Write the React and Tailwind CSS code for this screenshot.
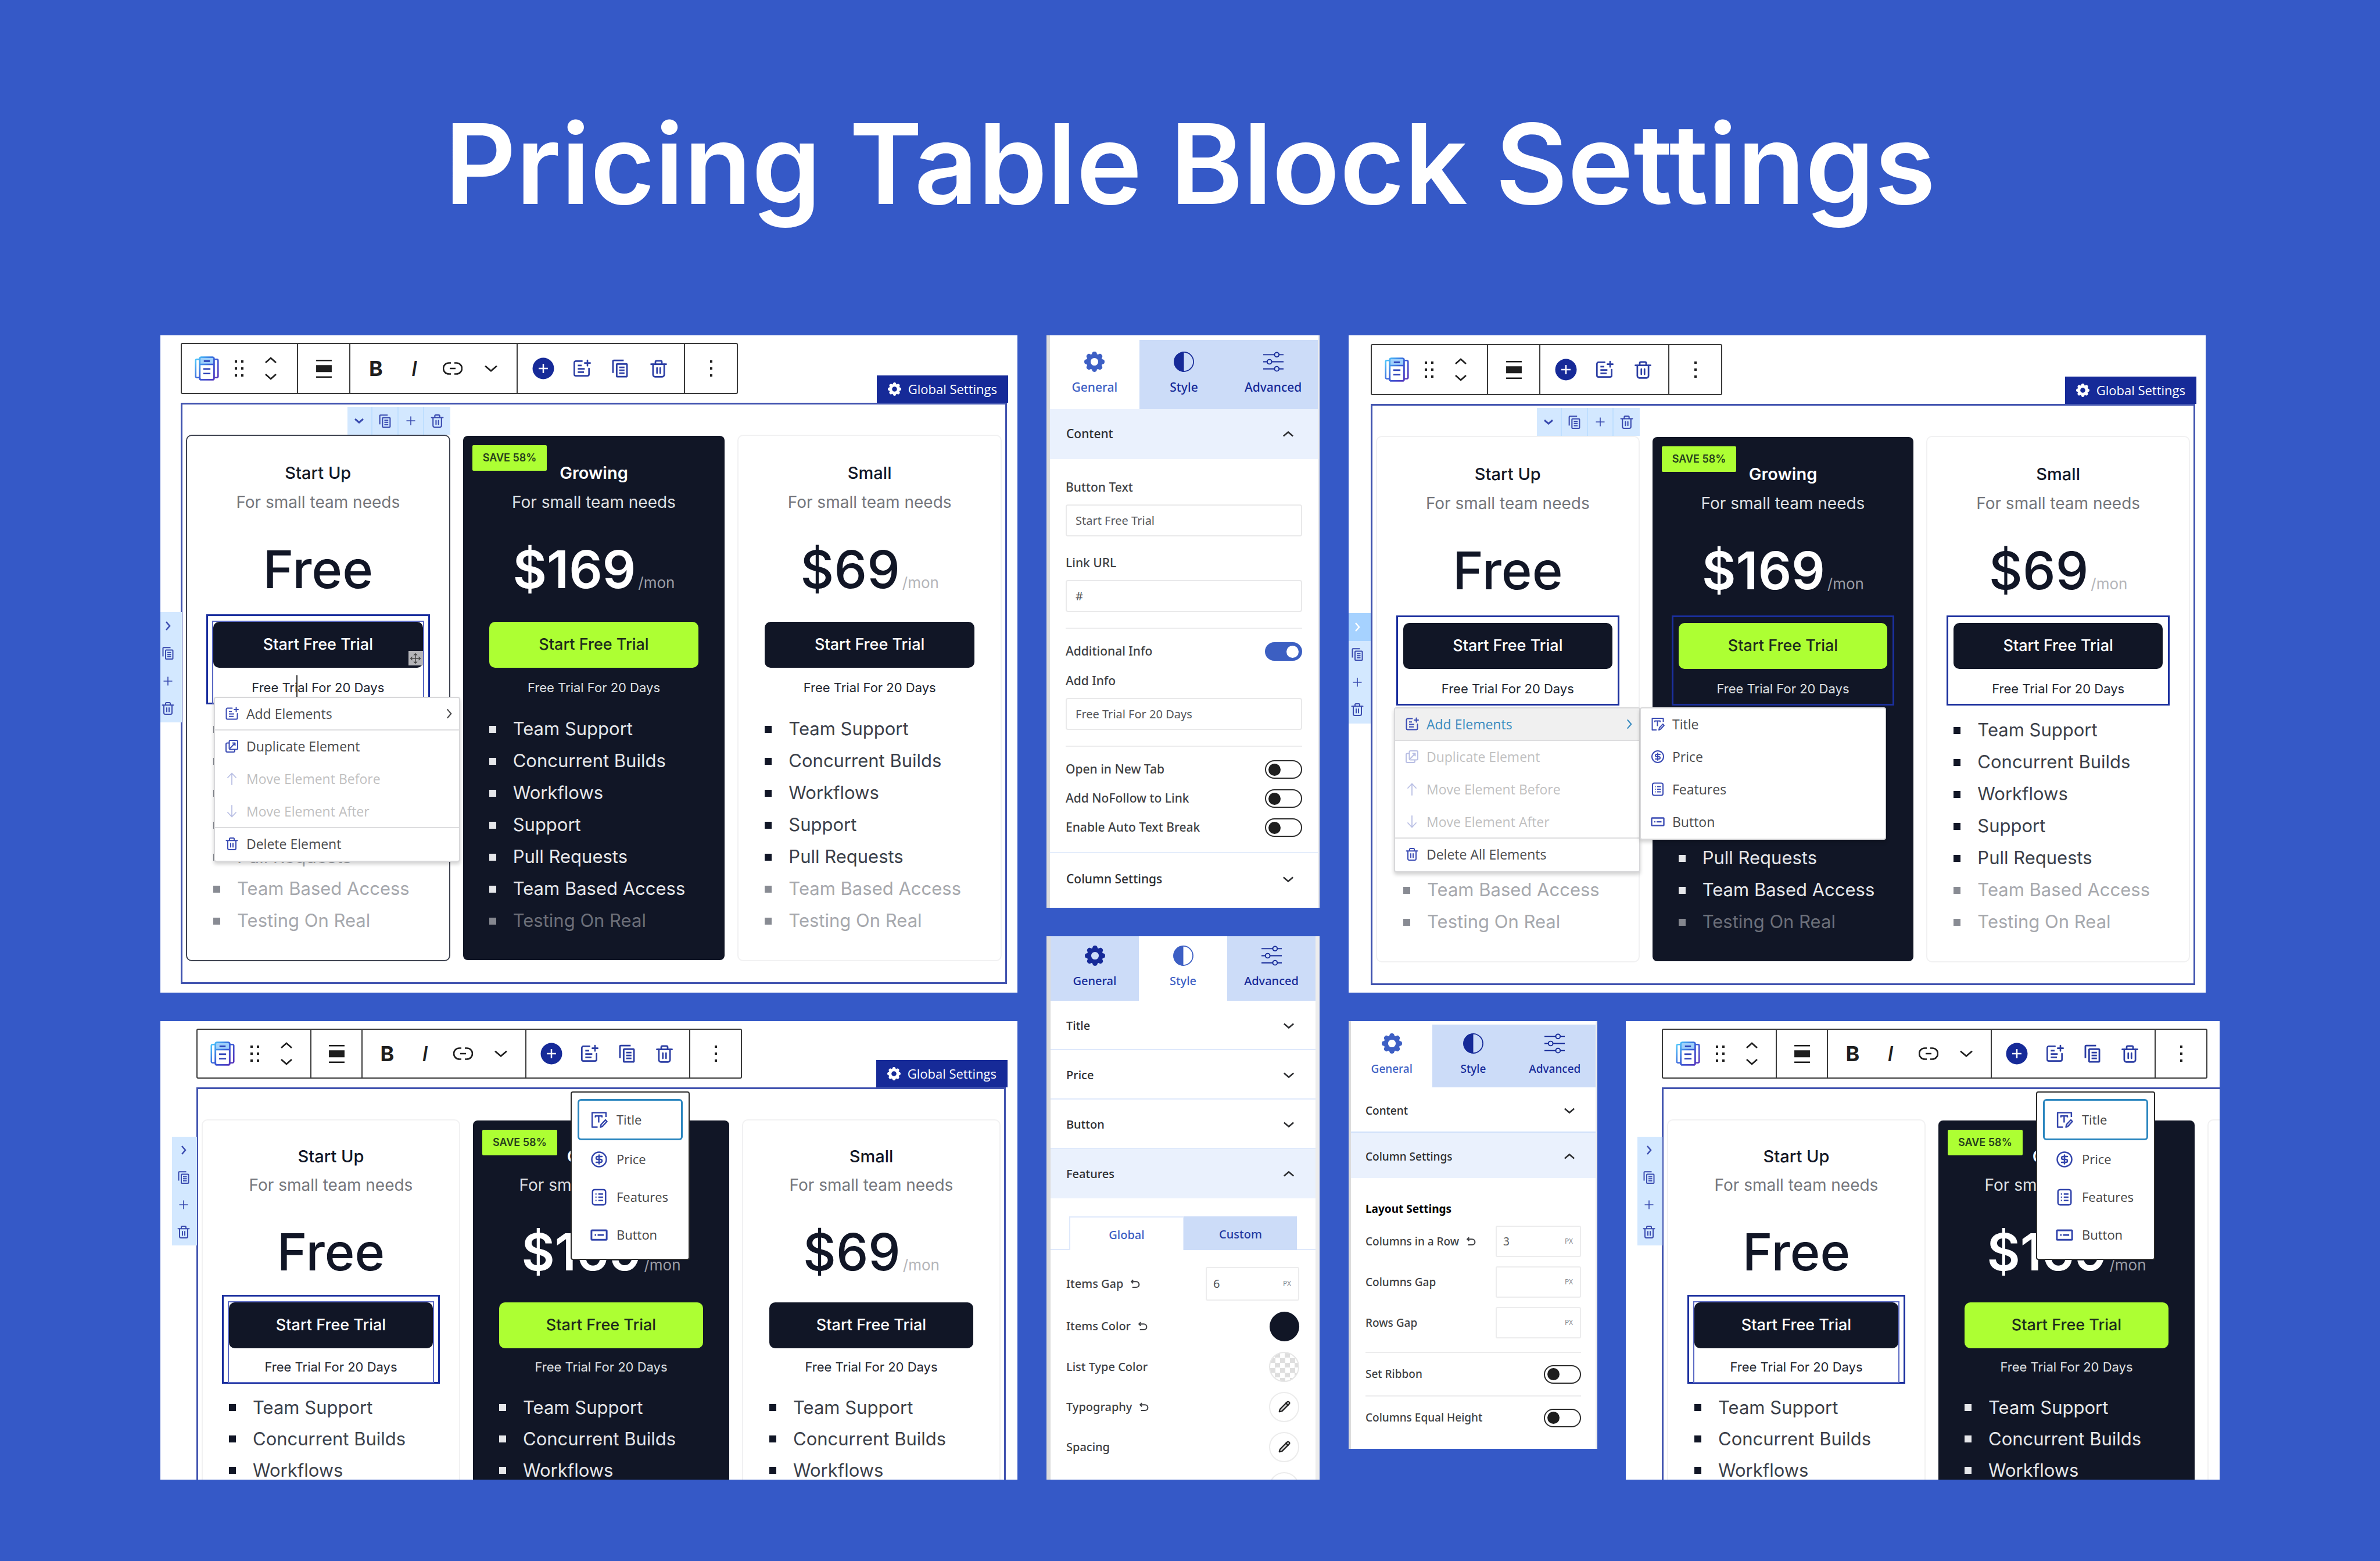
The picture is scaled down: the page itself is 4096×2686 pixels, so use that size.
import React, { useId } from "react";
import { CircleDollarSign, Pencil } from "lucide-react";

/* ---------- icons ---------- */

function Icon({ className = "size-8", sw = 2, children }) {
  return (
    <svg viewBox="0 0 24 24" className={className} fill="none" stroke="currentColor" strokeWidth={sw} strokeLinecap="round" strokeLinejoin="round" aria-hidden="true">
      {children}
    </svg>
  );
}

function PricingIcon() {
  const id = useId();
  return (
    <svg viewBox="0 0 24 24" className="size-[42px]" fill="none" stroke={`url(#${id})`} strokeWidth="1.5" aria-hidden="true">
      <defs>
        <linearGradient id={id} x1="0" y1="2" x2="24" y2="22" gradientUnits="userSpaceOnUse">
          <stop offset="0" stopColor="#4fd0ff" />
          <stop offset="0.5" stopColor="#3a5fd8" />
          <stop offset="1" stopColor="#5a2fb8" />
        </linearGradient>
      </defs>
      <path d="M5 3H2.200a1.200 1.200 0 0 0-1.200 1.200v15.600A1.200 1.200 0 0 0 2.200 21H5M19 3h2.800A1.200 1.200 0 0 1 23 4.200v15.600a1.200 1.200 0 0 1-1.200 1.200H19" />
      <rect x="5" y="1" width="14" height="22" rx="1.500" fill="#fff" />
      <path d="M5.500 1.500h13v6h-13z" fill="#9fd0fb" stroke="none" />
      <path d="M5 8h14" />
      <path d="M9 4.800h6M8.500 12.500h7M8.500 17h7" stroke="#2a3fb8" />
      <rect x="5" y="1" width="14" height="22" rx="1.500" />
    </svg>
  );
}

const Gear = ({ className }) => (
  <svg viewBox="-18 -18 36 36" className={className} fill="currentColor" aria-hidden="true">
    <circle r="10.500" fill="none" stroke="currentColor" strokeWidth="7.500" />
    {[0, 45, 90, 135, 180, 225, 270, 315].map((a) => (
      <path key={a} d="M-5 -13L-3.500 -16.500Q-2.500 -18 0 -18T3.500 -16.500L5 -13z" transform={`rotate(${a})`} />
    ))}
  </svg>
);

const Dots = () => (
  <svg viewBox="0 0 18 30" className="h-[30px] w-[18px]" fill="#1e1e1e" aria-hidden="true">
    {[2, 13].map((x) => [1, 13, 25].map((y) => <rect key={`${x}-${y}`} x={x} y={y} width="4" height="4" />))}
  </svg>
);

const MoreDots = () => (
  <svg viewBox="0 0 6 30" className="h-[30px] w-[6px]" fill="#1e1e1e" aria-hidden="true">
    {[1, 13, 25].map((y) => <rect key={y} x="1" y={y} width="4" height="4" />)}
  </svg>
);

const Movers = () => (
  <svg viewBox="0 0 22 42" className="h-[42px] w-[22px]" fill="none" stroke="#1e1e1e" strokeWidth="2.800" aria-hidden="true">
    <path d="M2 11l9-8 9 8M2 31l9 8 9-8" />
  </svg>
);

const AlignIcon = () => (
  <svg viewBox="0 0 26 30" className="h-[31px] w-[27px]" fill="#1e1e1e" aria-hidden="true">
    <path d="M0 0h26v2.500H0zM0 9h26v11.500H0zM0 27.500h26V30H0z" />
  </svg>
);

const LinkIcon = () => (
  <svg viewBox="0 0 34 22" className="h-[22px] w-[34px]" fill="none" stroke="#1e1e1e" strokeWidth="2.600" aria-hidden="true">
    <path d="M14 1.500h-3.500a9.500 9.500 0 0 0 0 19H14M20 1.500h3.500a9.500 9.500 0 0 1 0 19H20M12 11h10" />
  </svg>
);

const ChevronDown = ({ className = "size-8", sw = 2 }) => <Icon className={className} sw={sw}><path d="M5 9l7 6 7-6" strokeLinecap="butt" strokeLinejoin="miter" /></Icon>;
const ChevronUp = ({ className = "size-8", sw = 2 }) => <Icon className={className} sw={sw}><path d="M5 15l7-6 7 6" strokeLinecap="butt" strokeLinejoin="miter" /></Icon>;
const ChevronRight = ({ className = "size-8", sw = 2 }) => <Icon className={className} sw={sw}><path d="M9 5l6 7-6 7" strokeLinecap="butt" strokeLinejoin="miter" /></Icon>;
const Plus = ({ className = "size-8" }) => <Icon className={className} sw={2}><path d="M12 3v18M3 12h18" strokeLinecap="butt" /></Icon>;

const PlusCircle = () => (
  <svg viewBox="0 0 38 38" className="size-[38px]" aria-hidden="true">
    <circle cx="19" cy="19" r="18.500" fill="#162a98" />
    <path d="M19 11v16M11 19h16" stroke="#fff" strokeWidth="2.500" />
  </svg>
);

const AddDoc = ({ className = "size-8" }) => (
  <Icon className={className} sw={2}>
    <path d="M12.500 2.500H4.500a2 2 0 0 0-2 2v15a2 2 0 0 0 2 2h15a2 2 0 0 0 2-2v-7.500" />
    <path d="M7 8.200h5M7 12.500h9M7 16.800h8" strokeLinecap="butt" />
    <path d="M19.500 1.500v7M16 5h7" />
  </Icon>
);

const Copy = ({ className = "size-8" }) => (
  <Icon className={className} sw={2}>
    <path d="M3.500 17.500V3.200a1 1 0 0 1 1-1h12" strokeLinecap="butt" />
    <rect x="8" y="6.500" width="12.500" height="15.500" rx="1" />
    <path d="M11 10.700h6.500M11 14.200h6.500M11 17.700h6.500" strokeLinecap="butt" />
  </Icon>
);

const Trash = ({ className = "size-8" }) => (
  <Icon className={className} sw={2}>
    <path d="M2.500 6.200h19" />
    <path d="M8 6V3.500A1.500 1.500 0 0 1 9.500 2h5A1.500 1.500 0 0 1 16 3.500V6" />
    <path d="M5 6.500v13A2.500 2.500 0 0 0 7.500 22h9a2.500 2.500 0 0 0 2.500-2.500v-13" />
    <path d="M10 11v6.500M14 11v6.500" />
  </Icon>
);

const Duplicate = ({ className = "size-8" }) => (
  <Icon className={className} sw={2}>
    <path d="M7.500 6.500H4a2 2 0 0 0-2 2V20a2 2 0 0 0 2 2h11a2 2 0 0 0 2-2v-2" />
    <rect x="7.500" y="2" width="14.500" height="15.500" rx="2" />
    <path d="M9.500 15l8-8.500M13.500 6.500h4v4" />
  </Icon>
);

const ArrowUp = ({ className = "size-8" }) => <Icon className={className} sw={1.800}><path d="M12 22V3M5 10l7-7.500 7 7.500" /></Icon>;
const ArrowDown = ({ className = "size-8" }) => <Icon className={className} sw={1.800}><path d="M12 2v19M5 14l7 7.500 7-7.500" /></Icon>;

const TitleIcon = ({ className = "size-8" }) => (
  <Icon className={className} sw={2}>
    <path d="M21.500 8V2h-19v20H10" strokeLinecap="butt" />
    <path d="M7 8.500V6.500h9v2M11.500 6.500v9" strokeLinecap="butt" />
    <path d="M14 22l.8-3.600 6-6.400 2 2.200-6 6.500z" />
  </Icon>
);

const FeaturesIcon = ({ className = "size-8" }) => (
  <Icon className={className} sw={2}>
    <rect x="3" y="1.500" width="18" height="21" rx="3" />
    <path d="M7 7.500h1.500M11 7.500h6.500M7 12h1.500M11 12h6.500M7 16.500h1.500M11 16.500h6.500" strokeLinecap="butt" />
  </Icon>
);

const ButtonIcon = ({ className = "size-8" }) => (
  <Icon className={className} sw={2.400}>
    <rect x="1.500" y="5.500" width="21" height="13" rx="0.800" />
    <path d="M6 12h2M10 12h8.500" strokeLinecap="butt" />
  </Icon>
);

const DollarIcon = ({ className = "size-8" }) => <CircleDollarSign className={className} aria-hidden="true" />;

const Contrast = ({ className }) => (
  <svg viewBox="0 0 36 36" className={className} aria-hidden="true">
    <circle cx="18" cy="18" r="17" fill="none" stroke="currentColor" strokeWidth="1.800" />
    <path d="M18 0.500a17.500 17.500 0 0 0 0 35z" fill="currentColor" />
  </svg>
);

const Sliders = ({ className }) => (
  <svg viewBox="0 0 36 36" className={className} fill="none" stroke="currentColor" strokeWidth="2" aria-hidden="true">
    <path d="M0 5.500h20M28 5.500h8M0 18h7M15 18h21M0 30.500h20M28 30.500h8" />
    <circle cx="24" cy="5.500" r="4" />
    <circle cx="11" cy="18" r="4" />
    <circle cx="24" cy="30.500" r="4" />
  </svg>
);

const Reset = () => (
  <Icon className="size-[18px]" sw={2.800}>
    <path d="M3 7h11a6 6 0 0 1 0 13H5" strokeLinecap="butt" />
    <path d="M7 3L3 7l4 4" strokeLinejoin="miter" strokeLinecap="butt" />
  </Icon>
);

/* ---------- block editor ---------- */

function Tool({ label, compact, children }) {
  return (
    <button aria-label={label} className={`flex h-full items-center justify-center ${compact ? "w-[65px]" : "w-[66px]"}`}>
      {children}
    </button>
  );
}

function Toolbar({ compact, text = true, copy = true }) {
  const group = compact ? "px-[10px]" : "px-[11px]";
  return (
    <div role="toolbar" className={`flex divide-x-2 divide-[#3a3a3a] rounded-[3px] border-2 border-[#3a3a3a] bg-white text-[#2c3ea4] ${compact ? "h-[86px]" : "h-[88px]"}`}>
      <div className={`flex items-center pl-[22px] ${compact ? "w-[196px]" : "w-[200px]"}`}>
        <button aria-label="Pricing table"><PricingIcon /></button>
        <button aria-label="Drag" className="ml-[25px]"><Dots /></button>
        <button aria-label="Move up or down" className="ml-[35px]"><Movers /></button>
      </div>
      <div className={`flex items-center justify-center ${compact ? "w-[88px]" : "w-[90px]"}`}>
        <button aria-label="Align"><AlignIcon /></button>
      </div>
      {text && (
        <div className={`flex text-[36px] text-[#1e1e1e] ${group}`}>
          <Tool label="Bold" compact={compact}><span className="font-bold">B</span></Tool>
          <Tool label="Italic" compact={compact}><span className="font-medium italic">I</span></Tool>
          <Tool label="Link" compact={compact}><LinkIcon /></Tool>
          <Tool label="More" compact={compact}><ChevronDown className="size-[34px]" /></Tool>
        </div>
      )}
      <div className={`flex ${group}`}>
        <Tool label="Add" compact={compact}><PlusCircle /></Tool>
        <Tool label="Add element" compact={compact}><AddDoc className="size-[32px]" /></Tool>
        {copy && <Tool label="Duplicate" compact={compact}><Copy className="size-[34px]" /></Tool>}
        <Tool label="Delete" compact={compact}><Trash className="size-[33px]" /></Tool>
      </div>
      <div className={`flex items-center justify-center ${compact ? "w-[87px]" : "w-[89px]"}`}>
        <button aria-label="Options"><MoreDots /></button>
      </div>
    </div>
  );
}

function GlobalSettings() {
  return (
    <button className="flex h-[47px] items-center gap-3 bg-[#162a98] px-[19px] font-['Open_Sans',sans-serif] text-[22px] font-medium text-white">
      <Gear className="size-[23px]" />
      Global Settings
    </button>
  );
}

function ColumnTools() {
  return (
    <div className="flex h-12 divide-x-2 divide-[#bfdfff] bg-[#d3e8ff] text-[#3a4bb0]">
      <button aria-label="Collapse" className="flex w-[43px] items-center justify-center"><ChevronDown className="size-6" sw={3} /></button>
      <button aria-label="Duplicate column" className="flex w-[45px] items-center justify-center"><Copy className="size-[25px]" /></button>
      <button aria-label="Add column" className="flex w-[44px] items-center justify-center"><Plus className="size-5" /></button>
      <button aria-label="Delete column" className="flex w-[45px] items-center justify-center"><Trash className="size-[25px]" /></button>
    </div>
  );
}

function SideTools({ className, active, pad = "" }) {
  const cell = `flex flex-1 items-center justify-center ${pad}`;
  return (
    <div className={`absolute flex flex-col bg-[#d3e8ff] text-[#3a4bb0] ${className}`}>
      <button aria-label="Next" className={`${cell} ${active ? "bg-[#a6d2ff] text-white" : ""}`}><ChevronRight className="size-6" sw={2.500} /></button>
      <button aria-label="Duplicate" className={cell}><Copy className="size-6" /></button>
      <button aria-label="Add" className={cell}><Plus className="size-5" /></button>
      <button aria-label="Delete" className={cell}><Trash className="size-6" /></button>
    </div>
  );
}

const FEATURES = ["Team Support", "Concurrent Builds", "Workflows", "Support", "Pull Requests", "Team Based Access", "Testing On Real"];

function PlanCard({ name, price, mon, dark, badge, mutedFrom, count, compact, outlined, selected, inner, editing }) {
  const edge = dark ? "border-transparent bg-[#111626] bg-clip-padding text-white" : outlined ? "border-[#3f4350] bg-white" : "border-[#f1f1f2] bg-white";
  return (
    <article className={`relative rounded-[10px] border-2 text-[#111626] ${edge} ${compact ? "pt-[42px] pb-10" : "pt-[44px] pb-10"}`}>
      {badge && (
        <span className="absolute top-4 left-4 rounded-[2px] bg-[#adff33] px-[18px] text-[18px] leading-[44px] font-semibold text-[#26401c]">SAVE 58%</span>
      )}
      <h3 className={`text-center text-[29px] leading-10 ${dark ? "font-semibold" : "font-medium"}`}>{name}</h3>
      <p className={`text-center text-[28px] ${dark ? "text-[#dfe0e3]" : "text-[#74767c]"} ${compact ? "leading-[58px]" : "leading-[60px]"}`}>For small team needs</p>
      <p className={`text-center whitespace-nowrap ${compact ? "pt-3 text-[88px] leading-[148px]" : "pt-[9px] text-[90px] leading-[154px]"} ${dark ? "font-semibold" : "font-medium"}`}>
        {price}
        {mon && <span className={`ml-1 text-[26px] leading-none font-normal ${dark ? "text-[#9c9ea6]" : "text-[#b4b5b9]"}`}>/mon</span>}
      </p>
      <div className={`mx-[33px] border-[3px] px-[9px] pt-[10px] ${selected ? "border-[#1b2f9e]" : "border-transparent"}`}>
        <div className={inner ? "outline-2 outline-[#5a69c4] outline-solid" : ""}>
          <button className={`relative h-[79px] w-full rounded-[10px] text-[27px] font-medium ${dark ? "bg-[#adff33] text-[#1d2b1c]" : "bg-[#111626] text-white"}`}>
            Start Free Trial
            {editing && (
              <span className="absolute right-0 bottom-1 flex size-[25px] items-center justify-center bg-[#b4b4b8] text-[#444]">
                <Icon className="size-5" sw={1.800}><path d="M12 2v20M2 12h20M9 5l3-3 3 3M9 19l3 3 3-3M5 9l-3 3 3 3M19 9l3 3-3 3" /></Icon>
              </span>
            )}
          </button>
          <p className={`text-center text-[22px] leading-[52px] ${dark ? "text-[#dfe0e3]" : "text-[#22262f]"} ${compact ? "mt-[6px]" : "mt-2"}`}>
            Free Tr{editing ? <span className="relative after:absolute after:top-[-8px] after:left-[3px] after:h-[46px] after:w-[2px] after:bg-[#333]">i</span> : "i"}al For 20 Days
          </p>
        </div>
      </div>
      <ul className={compact ? "mt-[14px]" : "mt-[15px]"}>
        {FEATURES.slice(0, count).map((f, i) => {
          const muted = i >= mutedFrom;
          const tone = dark
            ? muted ? "text-[#6c6f79]" : "text-[#e6e7ea]"
            : muted ? "text-[#a6a8ad]" : "text-[#3b3f49]";
          const dot = dark
            ? muted ? "bg-[#85878f]" : "bg-[#e6e7ea]"
            : muted ? "bg-[#888b93]" : "bg-[#111626]";
          return (
            <li key={f} className={`flex items-center gap-[29px] pl-[45px] text-[31px] whitespace-nowrap ${tone} ${compact ? "h-[54px]" : "h-[55px]"}`}>
              <span className={`size-3 shrink-0 ${dot}`} />
              {f}
            </li>
          );
        })}
      </ul>
    </article>
  );
}

function Plans({ compact, tools, outlinedFirst, selectAll, inner, editing, mutedFirst, count, blankLast, className }) {
  return (
    <section className={`grid grid-cols-3 gap-x-5 border-[3px] border-[#4254b0] px-[6px] pt-1 ${className}`}>
      <div className="col-span-3 grid h-12 grid-cols-3 gap-x-5">
        <div className="flex justify-end">{tools && <ColumnTools />}</div>
      </div>
      <PlanCard name="Start Up" price="Free" mutedFrom={mutedFirst} count={count} compact={compact} outlined={outlinedFirst} selected inner={inner} editing={editing} />
      <PlanCard name="Growing" price="$169" mon dark badge mutedFrom={6} count={count} compact={compact} selected={selectAll} />
      {blankLast
        ? <article className="rounded-[10px] border-2 border-[#f1f1f2]" />
        : <PlanCard name="Small" price="$69" mon mutedFrom={5} count={count} compact={compact} selected={selectAll} />}
    </section>
  );
}

/* ---------- menus ---------- */

function MenuItem({ icon: I, children, disabled, active, arrow, line }) {
  return (
    <button
      role="menuitem"
      disabled={disabled}
      className={`flex h-14 w-full items-center gap-[13px] pr-1 pl-[17px] text-left ${line ? "border-[#dddddf]" : "border-transparent"} border-b-2 ${active ? "bg-[#f0f0f0] text-[#3a8cc0]" : "text-[#4a4a4c]"}`}
    >
      <I className={`size-[24px] shrink-0 text-[#3a4bb4] ${disabled ? "opacity-35" : ""}`} />
      <span className={`flex-1 ${disabled ? "opacity-35" : ""}`}>{children}</span>
      {arrow && <ChevronRight className="size-[26px]" sw={2} />}
    </button>
  );
}

const menuBox = "absolute z-10 w-[424px] overflow-hidden rounded-[4px] border-2 border-[#d8d8da] bg-white font-['Open_Sans',sans-serif] text-[23px] shadow-[0_4px_6px_rgba(0,0,0,0.18)]";

function ContextMenu({ className, opened }) {
  return (
    <div role="menu" className={`${menuBox} ${className}`}>
      <MenuItem icon={AddDoc} arrow line active={opened}>Add Elements</MenuItem>
      <MenuItem icon={Duplicate} disabled={opened}>Duplicate Element</MenuItem>
      <MenuItem icon={ArrowUp} disabled>Move Element Before</MenuItem>
      <MenuItem icon={ArrowDown} disabled line>Move Element After</MenuItem>
      <MenuItem icon={Trash}>{opened ? "Delete All Elements" : "Delete Element"}</MenuItem>
    </div>
  );
}

const ELEMENTS = [["Title", TitleIcon], ["Price", DollarIcon], ["Features", FeaturesIcon], ["Button", ButtonIcon]];

function ElementSubmenu({ className }) {
  return (
    <div role="menu" className={`${menuBox} ${className}`}>
      {ELEMENTS.map(([n, I]) => <MenuItem key={n} icon={I}>{n}</MenuItem>)}
    </div>
  );
}

function ElementPopup() {
  return (
    <div role="menu" className="absolute top-[121px] left-[706px] z-10 w-[205px] rounded-[4px] border-2 border-[#2a2a2a] bg-white px-[10px] pt-[11px] pb-[9px] font-['Open_Sans',sans-serif] text-[22px] text-[#444]">
      {ELEMENTS.map(([n, I], i) => (
        <button key={n} role="menuitem" className={`flex w-full items-center gap-[15px] rounded-[6px] border-[3px] pl-[19px] text-left ${i === 0 ? "h-[71px] border-[#2b86bf]" : "h-[65px] border-transparent"}`}>
          <I className="size-[30px] text-[#3345ac]" />
          {n}
        </button>
      ))}
    </div>
  );
}

/* ---------- settings sidebars ---------- */

function Tabs({ active, className }) {
  const tabs = [["General", Gear], ["Style", Contrast], ["Advanced", Sliders]];
  return (
    <div role="tablist" className={`grid shrink-0 grid-cols-3 font-medium ${className}`}>
      {tabs.map(([n, I]) => (
        <button key={n} role="tab" aria-selected={n === active} className={`flex flex-col items-center justify-center gap-[12px] pb-1 ${n === active ? "bg-white text-[#3d5fc4]" : "bg-[#ccdcf8] text-[#162a98]"}`}>
          <I className="size-[35px]" />
          <span className="leading-7">{n}</span>
        </button>
      ))}
    </div>
  );
}

function SectionHead({ open, className, children }) {
  return (
    <button aria-expanded={!!open} className={`flex w-full shrink-0 items-center justify-between text-left font-medium text-[#2c2d30] ${open ? "bg-[#eaf1fd]" : "bg-white"} ${className}`}>
      {children}
      {open ? <ChevronUp className="size-7" sw={2.200} /> : <ChevronDown className="size-7" sw={2.200} />}
    </button>
  );
}

function Field({ label, value, className }) {
  return (
    <label className={`flex flex-col gap-[14px] font-medium ${className}`}>
      <span className="leading-8">{label}</span>
      <input defaultValue={value} className="h-[55px] w-full rounded-[4px] border-2 border-[#e9e9ea] px-[15px] text-[20px] font-normal text-[#55565a]" />
    </label>
  );
}

function Toggle({ label, on, className }) {
  return (
    <label className={`flex items-center justify-between font-medium ${className}`}>
      {label}
      <input
        type="checkbox"
        role="switch"
        defaultChecked={on}
        className="flex h-8 w-[64px] appearance-none items-center rounded-full border-2 border-[#2a2a2a] bg-white px-[4px] before:block before:size-[21px] before:rounded-full before:bg-[#1e1e1e] checked:justify-end checked:border-[#3c5fc2] checked:bg-[#3c5fc2] checked:before:bg-white"
      />
    </label>
  );
}

function NumberField({ label, reset, value, className, boxClass }) {
  return (
    <label className={`flex items-center justify-between font-medium ${className}`}>
      <span className="flex items-center gap-3">{label}{reset && <Reset />}</span>
      <span className={`flex items-center rounded-[3px] border-2 border-[#ececed] bg-white pr-[12px] pl-[11px] ${boxClass}`}>
        <input defaultValue={value} className="w-0 min-w-0 flex-1 font-normal text-[#55565a]" />
        <span className="text-[12px] font-normal text-[#8a8b8f]">PX</span>
      </span>
    </label>
  );
}

function SwatchRow({ label, reset, kind, className }) {
  return (
    <div className={`flex shrink-0 items-center justify-between font-medium ${className}`}>
      <span className="flex items-center gap-3">{label}{reset && <Reset />}</span>
      {kind === "solid" && <button aria-label={label} className="size-[51px] rounded-full bg-[#111626]" />}
      {kind === "clear" && <button aria-label={label} className="size-[52px] rounded-full border-2 border-[#e6e6e6] bg-[repeating-conic-gradient(#dedede_0_25%,#fff_0_50%)] bg-[length:17px_17px]" />}
      {kind === "edit" && (
        <button aria-label={label || "Edit"} className="flex size-[52px] items-center justify-center rounded-full border-2 border-[#ececec]">
          <Pencil className="size-[21px] fill-[#d5d5d8] text-[#1e1e1e]" strokeWidth={2.500} />
        </button>
      )}
    </div>
  );
}

const sidebar = "border-l-[#dcdcdc] border-r-[#ededed] bg-white font-['Noto_Sans',sans-serif] text-[#3e3f43]";

function ContentSidebar() {
  return (
    <aside className={`border-r-[3px] border-l-[6px] pt-2 text-[21px] ${sidebar}`}>
      <Tabs active="General" className="h-[119px]" />
      <SectionHead open className="h-[86px] pr-[37px] pl-7">Content</SectionHead>
      <div className="px-[27px] pt-8 pb-[17px]">
        <Field label="Button Text" value="Start Free Trial" />
        <Field label="Link URL" value="#" className="mt-[29px]" />
        <hr className="mt-[27px] mb-[14px] border-t-2 border-[#ececed]" />
        <Toggle label="Additional Info" on className="h-[50px]" />
        <Field label="Add Info" value="Free Trial For 20 Days" className="mt-[9px]" />
        <hr className="mt-[27px] mb-[14px] border-t-2 border-[#ececed]" />
        <Toggle label="Open in New Tab" className="h-[50px]" />
        <Toggle label="Add NoFollow to Link" className="h-[50px]" />
        <Toggle label="Enable Auto Text Break" className="h-[50px]" />
      </div>
      <SectionHead className="h-[96px] border-t-2 border-[#e4edfb] pr-[37px] pb-1 pl-7">Column Settings</SectionHead>
    </aside>
  );
}

function StyleSidebar() {
  return (
    <aside className={`flex min-h-0 flex-1 flex-col overflow-hidden border-r-[7px] border-l-[7px] text-[20px] ${sidebar}`}>
      <Tabs active="Style" className="h-[111px]" />
      {["Title", "Price", "Button"].map((n) => (
        <SectionHead key={n} className="h-[85px] border-b-2 border-[#dfe9fb] pt-[3px] pr-[32px] pl-[27px]">{n}</SectionHead>
      ))}
      <SectionHead open className="h-[85px] pr-[32px] pl-[27px]">Features</SectionHead>
      <div role="tablist" className="mt-[31px] flex h-[58px] shrink-0 font-medium">
        <span className="w-[32px] border-b-2 border-[#dfe9fb]" />
        <button role="tab" aria-selected="true" className="flex-1 border-2 border-b-0 border-[#dfe9fb] pt-1 text-[#3d5fc4]">Global</button>
        <button role="tab" aria-selected="false" className="flex-1 bg-[#ccdcf8] pt-1 text-[#2338a0]">Custom</button>
        <span className="w-[32px] border-b-2 border-[#dfe9fb]" />
      </div>
      <div className="mt-5 pr-[28px] pl-[27px]">
        <NumberField label="Items Gap" reset value="6" className="h-[76px]" boxClass="h-[58px] w-[161px]" />
        <SwatchRow label="Items Color" reset kind="solid" className="h-[70px]" />
        <SwatchRow label="List Type Color" kind="clear" className="h-[69px]" />
        <SwatchRow label="Typography" reset kind="edit" className="h-[69px]" />
        <SwatchRow label="Spacing" kind="edit" className="h-[69px]" />
        <SwatchRow label="" kind="edit" className="h-[69px]" />
      </div>
    </aside>
  );
}

function ColumnSidebar() {
  return (
    <aside className={`self-start border-r-[3px] border-l-[4px] pt-[6px] text-[19px] ${sidebar}`}>
      <Tabs active="General" className="h-[108px]" />
      <SectionHead className="h-[78px] border-b-2 border-[#cfe0fa] pt-1 pr-[31px] pl-[25px]">Content</SectionHead>
      <SectionHead open className="h-[78px] pt-1 pr-[31px] pl-[25px]">Column Settings</SectionHead>
      <div className="px-[25px] pt-[36px] pb-[17px]">
        <h4 className="mb-1 leading-[34px] font-bold text-black">Layout Settings</h4>
        <NumberField label="Columns in a Row" reset value="3" className="h-[70px]" boxClass="h-[54px] w-[147px]" />
        <NumberField label="Columns Gap" className="h-[70px]" boxClass="h-[54px] w-[147px]" />
        <NumberField label="Rows Gap" className="h-[70px]" boxClass="h-[54px] w-[147px]" />
        <hr className="mt-[15px] border-t-2 border-[#ececed]" />
        <Toggle label="Set Ribbon" className="h-[73px]" />
        <hr className="border-t-2 border-[#ececed]" />
        <Toggle label="Columns Equal Height" className="h-[73px]" />
      </div>
    </aside>
  );
}

/* ---------- page ---------- */

export default function App() {
  return (
    <main className="flex h-screen flex-col bg-[#3559c7] px-[276px] pb-[140px] font-['Inter',sans-serif]">
      <h1 className="pt-[182px] pb-[195px] text-center text-[191px] leading-[200px] font-semibold whitespace-nowrap text-white">Pricing Table Block Settings</h1>

      <div className="grid min-h-0 flex-1 grid-cols-[1475fr_470fr_1499fr] grid-rows-[100%] gap-x-[50px]">
        <div className="flex min-h-0 flex-col gap-[49px]">
          <div className="relative bg-white pb-[15px]">
            <div className="flex items-end justify-between pt-[13px] pr-4 pl-[35px]">
              <div className="mb-[15px]"><Toolbar /></div>
              <GlobalSettings />
            </div>
            <Plans tools outlinedFirst inner editing mutedFirst={0} className="mr-[18px] ml-[35px] pb-[36px]" />
            <SideTools pad="pr-[11px]" className="top-[476px] left-0 h-[190px] w-[37px]" />
            <ContextMenu className="top-[622px] left-[92px]" />
          </div>
          <div className="relative min-h-0 flex-1 overflow-hidden bg-white">
            <div className="flex items-end justify-between pt-[13px] pr-[17px] pl-[62px]">
              <div className="mb-[15px]"><Toolbar compact /></div>
              <GlobalSettings />
            </div>
            <Plans compact inner mutedFirst={5} count={3} className="mr-[20px] ml-[62px]" />
            <SideTools pad="pr-1" className="top-[199px] left-5 h-[187px] w-[43px]" />
            <ElementPopup />
          </div>
        </div>

        <div className="flex min-h-0 flex-col gap-[49px]">
          <ContentSidebar />
          <StyleSidebar />
        </div>

        <div className="flex min-h-0 flex-col gap-[49px]">
          <div className="relative mr-[24px] bg-white pb-[13px]">
            <div className="flex items-end justify-between pt-[15px] pr-4 pl-[38px]">
              <div className="mb-[15px]"><Toolbar text={false} copy={false} /></div>
              <GlobalSettings />
            </div>
            <Plans tools selectAll mutedFirst={5} className="mr-[18px] ml-[38px] pb-[36px]" />
            <SideTools active pad="pr-2" className="top-[478px] left-0 h-[190px] w-[38px]" />
            <ContextMenu opened className="top-[640px] left-[78px]" />
            <ElementSubmenu className="top-[640px] left-[501px]" />
          </div>
          <div className="grid min-h-0 flex-1 grid-cols-[428fr_1022fr] grid-rows-[100%] gap-x-[49px]">
            <ColumnSidebar />
            <div className="relative min-h-0 overflow-hidden bg-white">
              <div className="min-w-[1475px]">
                <div className="flex items-end pt-[13px] pl-[62px]">
                  <div className="mb-[15px]"><Toolbar compact /></div>
                </div>
                <Plans compact inner mutedFirst={5} count={3} blankLast className="mr-[20px] ml-[62px]" />
              </div>
              <SideTools pad="pr-1" className="top-[199px] left-5 h-[187px] w-[43px]" />
              <ElementPopup />
            </div>
          </div>
        </div>
      </div>
    </main>
  );
}
